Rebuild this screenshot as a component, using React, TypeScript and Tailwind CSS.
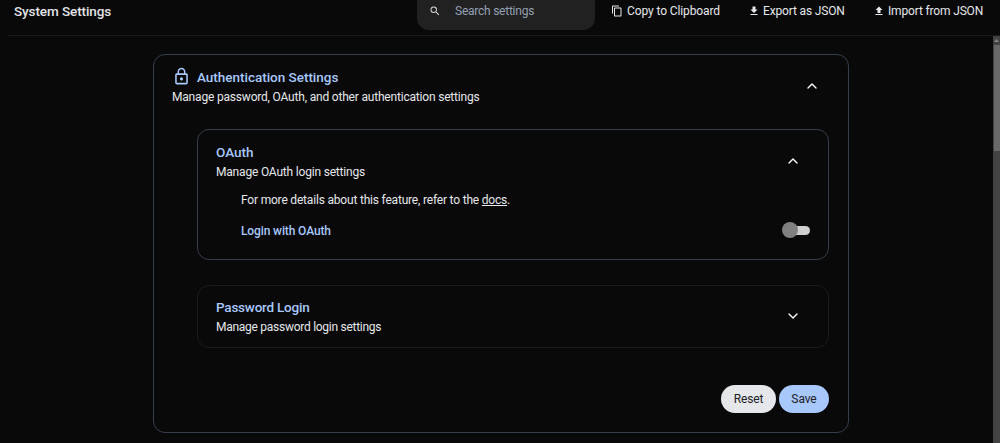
import React from "react";
import { ChevronDown, ChevronUp } from "lucide-react";
import { MdFileDownload, MdFileUpload, MdLockOutline, MdOutlineContentCopy, MdSearch } from "react-icons/md";

function Header() {
  return (
    <header className="ml-2 flex h-9 items-start border-b border-[#191919]">
      <h1 className="ml-1.5 w-[403px] pt-px text-[13.5px] leading-5 font-medium tracking-[-0.09px] text-[#e2e4e8]">System Settings</h1>
      <div className="flex h-[30px] w-[178px] items-start rounded-b-[12px] bg-[#212121] pt-px">
        <MdSearch className="mt-1 ml-3 size-3 text-[#d4d4d4]" />
        <span className="ml-3.5 text-[12px] leading-5 tracking-[-0.24px] text-[#94a0b3]">Search settings</span>
      </div>
      <div className="flex items-start pt-px text-[12px] leading-5 text-[#e5e7eb]">
        <button className="ml-4 flex w-[138px] items-center gap-1">
          <MdOutlineContentCopy className="size-3" />
          <span className="tracking-[-0.11px] whitespace-nowrap">Copy to Clipboard</span>
        </button>
        <button className="-ml-px flex w-[125px] items-center gap-[3px]">
          <MdFileDownload className="size-3" />
          <span className="tracking-[-0.15px] whitespace-nowrap">Export as JSON</span>
        </button>
        <button className="flex items-center gap-[3px]">
          <MdFileUpload className="size-3" />
          <span className="tracking-[-0.16px] whitespace-nowrap">Import from JSON</span>
        </button>
      </div>
    </header>
  );
}

export default function App() {
  return (
    <div className="h-[443px] w-[1000px] overflow-hidden bg-[#090909] font-['Roboto','Liberation_Sans',sans-serif] text-[#e5e7eb]">
      <Header />
      <div className="flex h-[407px]">
        <main className="ml-[153px] w-[840px] pt-[18px]">
          <section className="h-[379px] w-[696px] rounded-[12px] border border-[#363e4c] pr-[19px] pl-[18px]">
            <div className="flex h-[74px] items-start justify-between">
              <div className="pt-[11px]">
                <div className="flex h-[21px] items-center gap-1.5 text-[#a8c7fa]">
                  <MdLockOutline className="size-[19px]" />
                  <h2 className="text-[13.5px] leading-5 font-medium tracking-[-0.02px]">Authentication Settings</h2>
                </div>
                <p className="text-[12px] leading-5 tracking-[-0.19px]">Manage password, OAuth, and other authentication settings</p>
              </div>
              <ChevronUp className="mt-[23px] mr-[9px] size-4 text-white" strokeWidth={2} />
            </div>

            <section className="ml-[25px] h-[131px] rounded-[12px] border border-[#363e4c] pr-[18px] pl-[18px]">
              <div className="flex items-start justify-between">
                <div className="pt-3">
                  <h3 className="text-[13.5px] leading-5 font-medium text-[#a8c7fa]">OAuth</h3>
                  <p className="text-[12px] leading-5 tracking-[-0.19px]">Manage OAuth login settings</p>
                </div>
                <ChevronUp className="mt-[23px] mr-[9px] size-4 text-white" strokeWidth={2} />
              </div>
              <p className="mt-2 ml-[25px] text-[12px] leading-5 tracking-[-0.19px]">
                <span>For more details about this feature, refer to the </span><a className="underline">docs</a>.
              </p>
              <div className="mt-2.5 ml-[25px] flex items-center justify-between">
                <span className="pt-px text-[12px] leading-5 font-medium tracking-[-0.12px] text-[#a8c7fa]">Login with OAuth</span>
                <button className="mb-px flex h-4 w-7 items-center" aria-label="Login with OAuth">
                  <span className="z-10 size-4 shrink-0 rounded-full bg-[#808080]" />
                  <span className="-ml-2 h-[9px] w-5 rounded-full bg-[#cfcfcf]" />
                </button>
              </div>
            </section>

            <section className="mt-[25px] ml-[25px] flex h-[63px] items-start justify-between rounded-[12px] border border-[#171b22] pr-[18px] pl-[18px]">
              <div className="pt-[11px]">
                <h3 className="text-[13.5px] leading-5 font-medium tracking-[-0.22px] text-[#a8c7fa]">Password Login</h3>
                <p className="text-[12px] leading-5 tracking-[-0.27px]">Manage password login settings</p>
              </div>
              <ChevronDown className="mt-[22px] mr-[9px] size-4 text-white" strokeWidth={2} />
            </section>

            <div className="mt-[37px] flex justify-end gap-[3px] text-[12px] text-[#202124]">
              <button className="h-7 w-[55px] rounded-full bg-[#e5e7eb] tracking-[-0.1px]">Reset</button>
              <button className="h-7 w-[50px] rounded-full bg-[#a8c7fa] tracking-[-0.1px]">Save</button>
            </div>
          </section>
        </main>
        <div className="flex w-[7px] flex-col bg-[#424242]">
          <div className="flex h-[9px] items-center justify-center">
            <svg className="h-[3px] w-[5px]" viewBox="0 0 5 3"><path d="M0 3 2.5 0 5 3Z" fill="#858585" /></svg>
          </div>
          <div className="ml-px h-[106px] bg-[#686868]" />
        </div>
      </div>
    </div>
  );
}
